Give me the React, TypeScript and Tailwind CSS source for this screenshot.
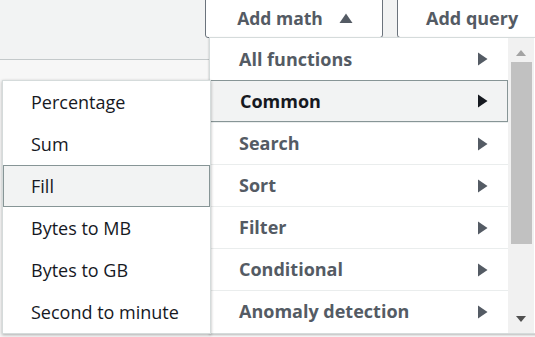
const functions = [
  'All functions',
  'Common',
  'Search',
  'Sort',
  'Filter',
  'Conditional',
  'Anomaly detection',
];

const common = [
  'Percentage',
  'Sum',
  'Fill',
  'Bytes to MB',
  'Bytes to GB',
  'Second to minute',
];

function Caret({ className }: { className?: string }) {
  return (
    <svg width="11" height="14" viewBox="0 0 11 14" className={className}>
      <path d="M1 0.5 L10.5 7 L1 13.5 Z" fill="currentColor" />
    </svg>
  );
}

export default function App() {
  return (
    <div className="relative h-[337px] w-[535px] overflow-hidden bg-[#f7f7f7] font-['Open_Sans',sans-serif]">
      <div className="flex h-[60px] items-start justify-end gap-[14px] border-b border-[#c4c9ca] bg-[#f2f3f3]">
        <button className="flex h-[39px] w-[178px] -translate-y-px items-center justify-center gap-[16px] rounded-b-[3px] border border-[#6b737c] bg-white pl-[2px] text-[17.5px] font-bold text-[#545b64]">
          Add math
          <svg width="14" height="11" viewBox="0 0 14 11">
            <path d="M7 0.5 L13.5 10 L0.5 10 Z" fill="#545b64" />
          </svg>
        </button>
        <button className="-mr-[3px] flex h-[39px] w-[141px] -translate-y-px items-center justify-start rounded-bl-[3px] border border-[#6b737c] bg-white pl-[28px] text-[18px] font-bold text-[#545b64]">
          Add query
        </button>
      </div>

      <div className="absolute top-[37px] left-[209px] flex w-[330px] border border-[#d5dbdb] bg-white shadow-[0_1px_2px_rgba(0,0,0,0.25)]">
        <ul className="w-[298px]">
          {functions.map((f, i) => (
            <li
              key={f}
              className={
                i === 1
                  ? 'flex h-[42px] items-center justify-between border border-[#879596] bg-[#f2f3f3] pr-[19px] pl-[29px] text-[18px] font-bold text-[#16191f]'
                  : 'flex h-[42px] items-center justify-between border-t border-[#eaeded] pr-[20px] pl-[29px] text-[18px] font-bold text-[#545b64] first:border-t-0'
              }
            >
              {f}
              <Caret />
            </li>
          ))}
        </ul>
        <div className="flex h-[295px] w-[26px] flex-col items-center bg-[#f1f1f1]">
          <svg width="12" height="8" viewBox="0 0 12 8" className="mt-[11px]">
            <path d="M6 1 L11 7 L1 7 Z" fill="#a3a3a3" />
          </svg>
          <div className="mt-[5px] h-[182px] w-[21px] bg-[#c1c1c1]" />
          <div className="flex-1" />
          <svg width="12" height="8" viewBox="0 0 12 8" className="mb-[10px]">
            <path d="M1 1 L11 1 L6 7 Z" fill="#505050" />
          </svg>
        </div>
      </div>

      <ul className="absolute top-[80px] left-[2px] w-[209px] border border-[#d5dbdb] bg-white shadow-[0_1px_3px_rgba(0,0,0,0.3)]">
        {common.map((c) => (
          <li
            key={c}
            className={
              c === 'Fill'
                ? 'flex h-[42px] items-center border border-[#879596] bg-[#f2f3f3] pl-[27px] text-[18px] text-[#16191f]'
                : 'flex h-[42px] items-center pl-[28px] text-[18px] text-[#16191f]'
            }
          >
            {c}
          </li>
        ))}
      </ul>
    </div>
  );
}
